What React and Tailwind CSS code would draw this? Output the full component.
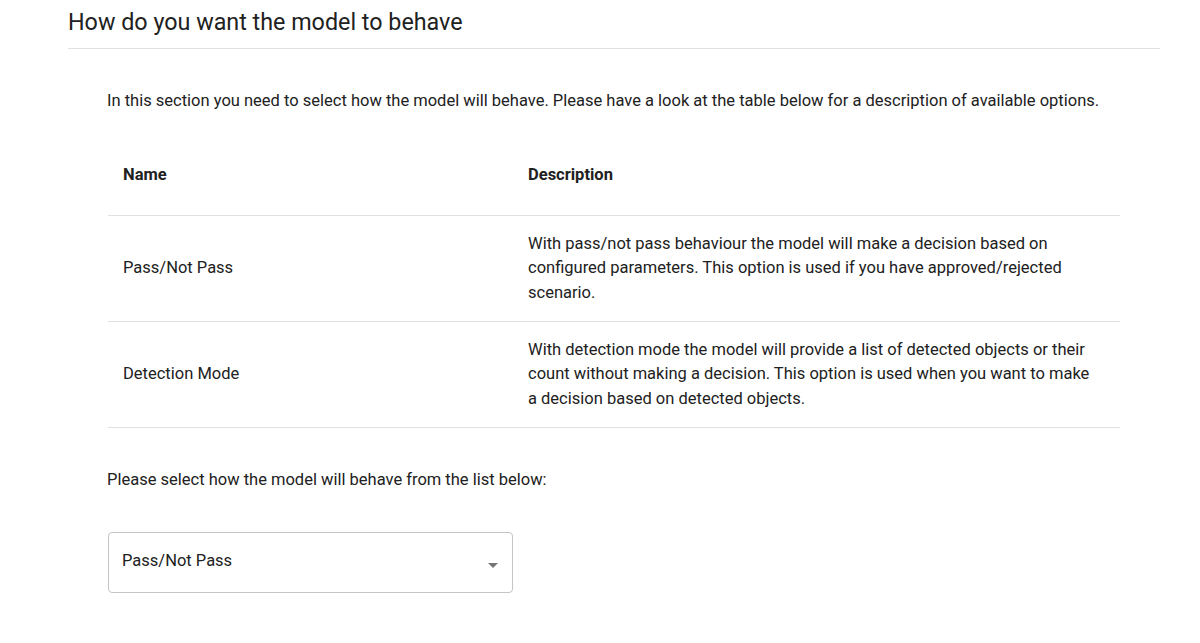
export default function App() {
  return (
    <div className="w-[1200px] h-[643px] bg-white overflow-hidden text-[#212121]" style={{ fontFamily: 'Roboto, "Liberation Sans", sans-serif' }}>
      <div className="ml-[68px] w-[1092px] pt-[8px]">
        <h1 className="text-[23.3px] leading-[28px] font-normal pb-[12px] border-b border-[#e0e0e0]">How do you want the model to behave</h1>
      </div>
      <div className="ml-[107px] w-[1013px] text-[16.5px]">
        <p className="mt-[40px] leading-[24px]">In this section you need to select how the model will behave. Please have a look at the table below for a description of available options.</p>
        <div className="mt-[42px] ml-px">
          <div className="flex h-[61px] items-start pt-[8px] border-b border-[#e0e0e0] font-bold">
            <div className="w-[420px] pl-[15px]">Name</div>
            <div>Description</div>
          </div>
          <div className="flex h-[106px] items-center border-b border-[#e0e0e0]">
            <div className="w-[420px] pl-[15px]">Pass/Not Pass</div>
            <div className="w-[560px] leading-[24.5px]">With pass/not pass behaviour the model will make a decision based on configured parameters. This option is used if you have approved/rejected scenario.</div>
          </div>
          <div className="flex h-[106px] items-center border-b border-[#e0e0e0]">
            <div className="w-[420px] pl-[15px]">Detection Mode</div>
            <div className="w-[570px] leading-[24.5px]">With detection mode the model will provide a list of detected objects or their count without making a decision. This option is used when you want to make a decision based on detected objects.</div>
          </div>
        </div>
        <p className="mt-[40px] leading-[24px]">Please select how the model will behave from the list below:</p>
        <div className="mt-[40px] ml-px w-[405px] h-[61px] border border-[#c4c4c4] rounded-[4px] flex items-center justify-between pl-[13px] pr-[14px]">
          <span className="mt-[-2px]">Pass/Not Pass</span>
          <svg width="10" height="5" viewBox="0 0 10 5" className="mt-[6px]"><path d="M0 0h10L5 5z" fill="#757575" /></svg>
        </div>
      </div>
    </div>
  );
}
